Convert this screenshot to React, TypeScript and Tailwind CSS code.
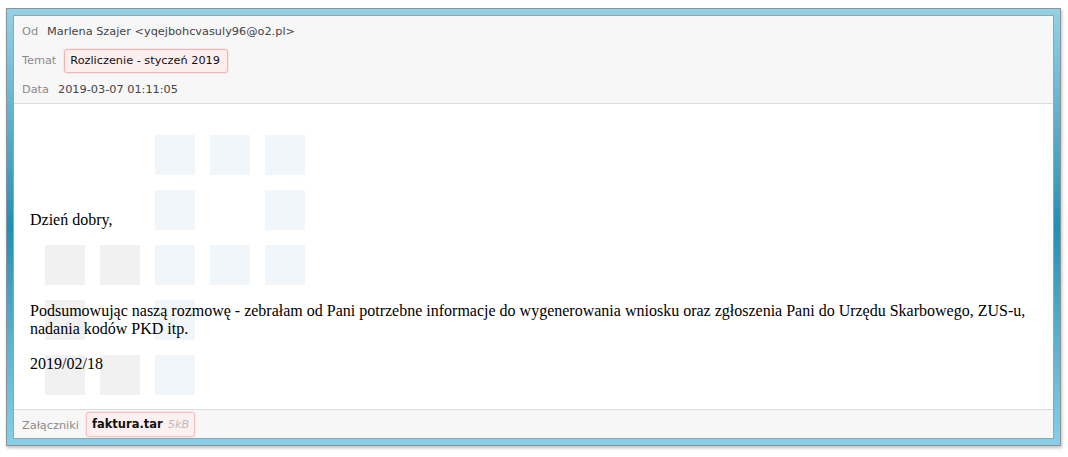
import React from "react";

const sans = { fontFamily: '"DejaVu Sans", Verdana, sans-serif' };

const G = "bg-[#f1f1f1]";
const B = "bg-[#f1f6fa]";

const rows: (string | null)[][] = [
  [null, null, B, B, B],
  [null, null, B, null, B],
  [G, G, B, B, B],
  [G, null, B, null, null],
  [G, G, B, null, null],
];

export default function App() {
  return (
    <div className="w-[1068px] h-[457px] bg-white pt-[8px] pl-[6px]">
      <div className="w-[1055px] h-[438px] border border-[#8c9396] bg-gradient-to-b from-[#93d2e6] via-[#1f8fb6] to-[#86d0e8] p-[6px] shadow-[1px_2px_3px_rgba(0,0,0,0.25)]">
        <div className="w-full h-full border border-[#9aa3a6] bg-white flex flex-col text-[11.3px]" style={sans}>
          {/* header */}
          <div className="h-[88px] bg-[#f7f7f7] border-b border-[#dcdcdc] pl-[8px] flex flex-col">
            <div className="h-[29px] flex items-center pt-[4px]">
              <span className="text-[#8a8a8a] mr-[9px]">Od</span>
              <span className="text-[#444]">Marlena Szajer &lt;yqejbohcvasuly96@o2.pl&gt;</span>
            </div>
            <div className="h-[29px] flex items-center pt-[3px]">
              <span className="text-[#8a8a8a] mr-[8px]">Temat</span>
              <span className="h-[24px] flex items-center pl-[5px] pr-[7px] border border-[#f4b3b3] bg-[#fdeeee] rounded-[3px] text-[#111] shadow-[0_0_2px_rgba(240,150,150,0.5)]">
                Rozliczenie - styczeń 2019
              </span>
            </div>
            <div className="h-[29px] flex items-center pt-[4px]">
              <span className="text-[#8a8a8a] mr-[9px]">Data</span>
              <span className="text-[#444]">2019-03-07 01:11:05</span>
            </div>
          </div>
          {/* body */}
          <div className="relative h-[305px] bg-white overflow-hidden">
            <div className="absolute left-[31px] top-[31px] grid grid-cols-[repeat(5,40px)] auto-rows-[40px] gap-[15px]">
              {rows.flat().map((c, i) => (
                <div key={i} className={c ?? ""} />
              ))}
            </div>
            <div
              className="relative px-[16px] pt-[107px] text-[16px] leading-[18px] text-black"
              style={{ fontFamily: '"Liberation Serif", "Times New Roman", serif' }}
            >
              <p>Dzień dobry,</p>
              <p className="mt-[73px]">
                Podsumowując naszą rozmowę - zebrałam od Pani potrzebne informacje do wygenerowania wniosku oraz zgłoszenia Pani do Urzędu Skarbowego, ZUS-u, nadania kodów PKD itp.
              </p>
              <p className="mt-[17px]">2019/02/18</p>
            </div>
          </div>
          {/* footer */}
          <div className="h-[29px] border-t border-[#dcdcdc] bg-[#f7f7f7] pl-[8px] pt-[2px] flex items-start">
            <span className="text-[#8a8a8a] mr-[7px] h-[25px] flex items-center pt-[3px]">Załączniki</span>
            <span className="h-[25px] flex items-center px-[5px] pt-[1px] border border-[#f6c0c0] bg-[#fdf0f0] rounded-[3px] shadow-[0_0_2px_rgba(240,150,150,0.5)]">
              <span className="font-bold text-[11.5px] text-[#111]">faktura.tar</span>
              <span className="italic text-[#bbbbbb] ml-[5px]">5kB</span>
            </span>
          </div>
        </div>
      </div>
    </div>
  );
}
